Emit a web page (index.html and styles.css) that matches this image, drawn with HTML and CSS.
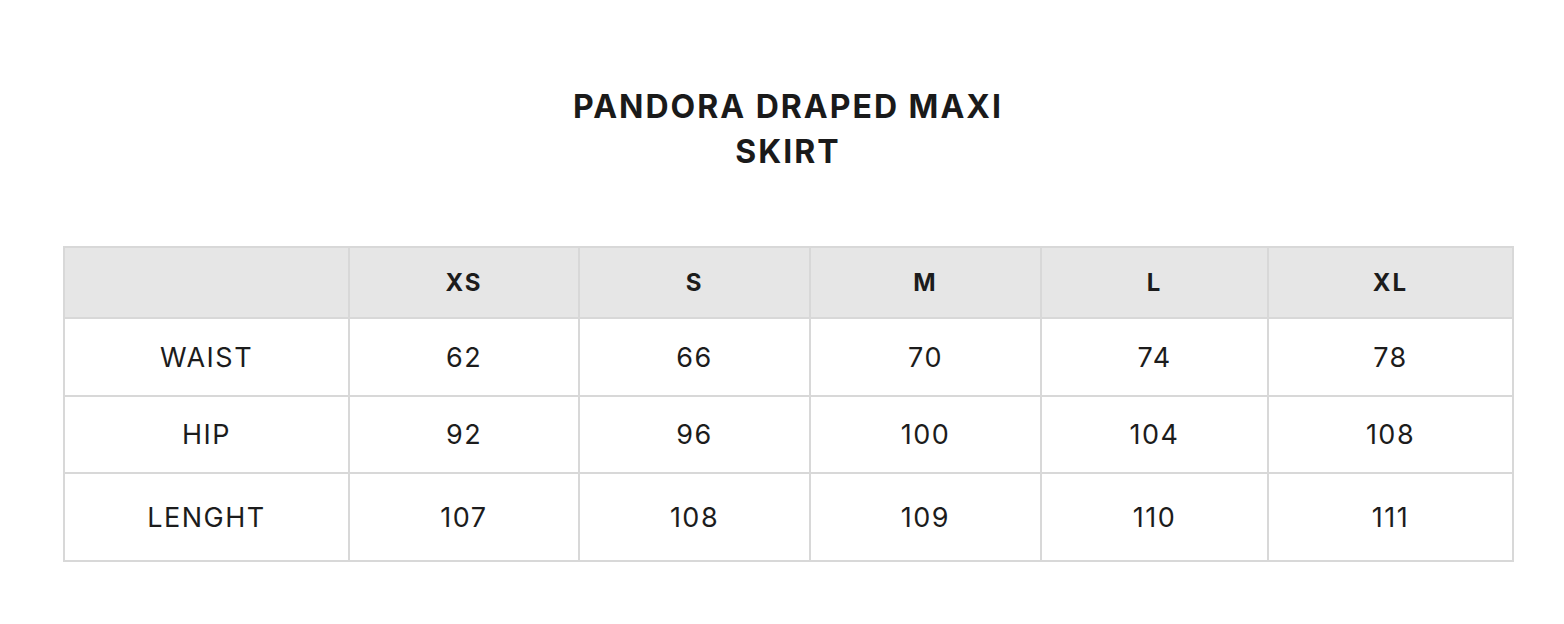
FILE: index.html
```html
<!DOCTYPE html>
<html>
<head>
<meta charset="utf-8">
<link rel="stylesheet" href="styles.css">
</head>
<body>
<div class="page">
  <h1 class="title">PANDORA DRAPED MAXI<br>SKIRT</h1>
  <table class="sizes">
    <colgroup>
      <col class="c0"><col class="c1"><col class="c2"><col class="c3"><col class="c4"><col class="c5">
    </colgroup>
    <thead>
      <tr class="head"><th></th><th>XS</th><th>S</th><th>M</th><th>L</th><th>XL</th></tr>
    </thead>
    <tbody>
      <tr class="r1"><td>WAIST</td><td>62</td><td>66</td><td>70</td><td>74</td><td>78</td></tr>
      <tr class="r2"><td>HIP</td><td>92</td><td>96</td><td>100</td><td>104</td><td>108</td></tr>
      <tr class="r3"><td>LENGHT</td><td>107</td><td>108</td><td>109</td><td>110</td><td>111</td></tr>
    </tbody>
  </table>
</div>
</body>
</html>
```
FILE: styles.css
```css
html, body {
  margin: 0;
  padding: 0;
  background: #ffffff;
}
body {
  font-family: "Inter", "DejaVu Sans", sans-serif;
  color: #1c1c1c;
}
.page {
  width: 1564px;
  height: 624px;
  padding: 84px 51px 0 63px;
  box-sizing: border-box;
}
.title {
  margin: 0;
  text-align: center;
  font-size: 32px;
  line-height: 45px;
  font-weight: 700;
  letter-spacing: 2px;
  color: #1a1a1a;
}
.sizes {
  margin-top: 72px;
  width: 1449px;
  border-collapse: collapse;
  table-layout: fixed;
  font-size: 27px;
  letter-spacing: 1.5px;
}
.c0 { width: 285px; }
.c1 { width: 230px; }
.c2 { width: 231px; }
.c3 { width: 231px; }
.c4 { width: 227px; }
.c5 { width: 245px; }
.sizes th, .sizes td {
  border: 2px solid #d8d8d8;
  text-align: center;
  vertical-align: middle;
  padding: 0;
}
.sizes th {
  background: #e6e6e6;
  font-weight: 700;
  font-size: 24px;
  letter-spacing: 2px;
}
.sizes td {
  font-weight: 400;
}
.head { height: 71px; }
.r1 { height: 78px; }
.r2 { height: 77px; }
.r3 { height: 88px; }
```
